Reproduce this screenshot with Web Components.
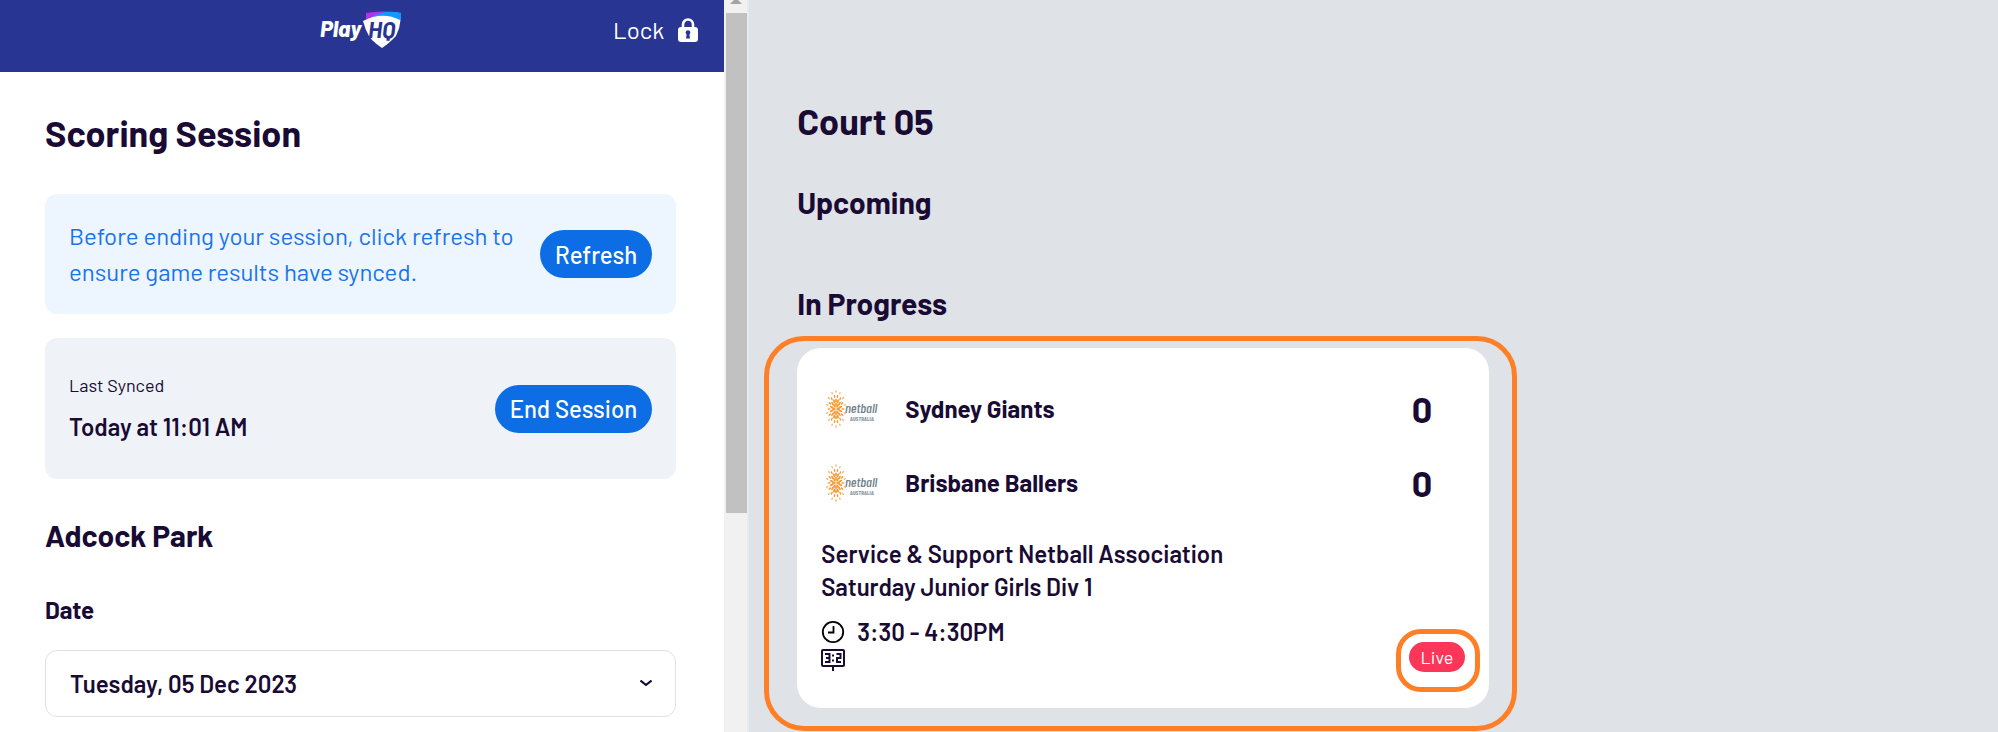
<!DOCTYPE html>
<html lang="en">
<head>
<meta charset="utf-8">
<meta name="viewport" content="width=device-width, initial-scale=1">
<title>PlayHQ Scoring</title>
<style>
  body {
    margin: 0;
    font-family: Barlow, Roboto, "Liberation Sans", sans-serif;
    font-size: 24px;
    line-height: 36px;
    color: #190b33;
    background: #dfe2e7;
  }
</style>
</head>
<body>
<scoring-app></scoring-app>

<script>
// Blue pill button, label comes from the slot
class PillButton extends HTMLElement {
  constructor() {
    super();
    this.attachShadow({ mode: 'open' });
    this.shadowRoot.innerHTML = `
      <style>
        :host { display: block; flex: none; }
        button {
          display: block;
          height: 48px;
          padding: 1px 15px 0;
          border: none;
          border-radius: 24px;
          background: #0c6de4;
          color: #fff;
          font: inherit;
          font-weight: 500;
          white-space: nowrap;
          cursor: pointer;
        }
        button:hover { background: #095bc1; }
      </style>
      <button type="button"><slot></slot></button>
    `;
  }
}
customElements.define('pill-button', PillButton);

// Rounded box with text on the left and an action on the right
class NoticeCard extends HTMLElement {
  constructor() {
    super();
    this.attachShadow({ mode: 'open' });
    this.shadowRoot.innerHTML = `
      <style>
        :host {
          display: flex;
          align-items: center;
          justify-content: space-between;
          gap: 24px;
          padding: 24px;
          border-radius: 12px;
          background: #eff3f8;
        }
        :host([tone="info"]) {
          background: #edf5fe;
          color: #1a73e8;
        }
        :host([tone="plain"]) { padding: 34px 24px; }
      </style>
      <div><slot></slot></div>
      <slot name="action"></slot>
    `;
  }
}
customElements.define('notice-card', NoticeCard);

class SessionHeader extends HTMLElement {
  constructor() {
    super();
    this.attachShadow({ mode: 'open' });
    this.shadowRoot.innerHTML = `
      <style>
        :host {
          display: grid;
          grid-template-columns: 1fr auto 1fr;
          align-items: center;
          box-sizing: border-box;
          min-height: 72px;
          padding: 0 26px 12px;
          background: #293592;
          color: #fff;
        }
        svg { display: block; }
        .logo { grid-column: 2; }
        button {
          justify-self: end;
          display: flex;
          align-items: center;
          gap: 14px;
          padding: 0;
          border: none;
          background: none;
          color: inherit;
          font: inherit;
          cursor: pointer;
        }
      </style>
      <svg class="logo" width="84" height="38" viewBox="0 0 84 38" role="img" aria-label="PlayHQ">
        <path d="M46 2 Q63 -1 81 2 V8 Q64 1 46 9 Z" fill="#b42ff0"/>
        <path d="M50 7 Q58 2 66 1 Q74 0 81 2 V9 Q64 2 50 7 Z" fill="#0c9bff"/>
        <path d="M43 10 Q62 0 80.500 9 Q80 17 76 25 L72 29 Q68 33 62 37 Q56 33 52 29 L49 25 Q45 18 43 10 Z" fill="#fff"/>
        <text x="0" y="26" font-family="Barlow" font-size="22" font-weight="800" font-style="italic" fill="#fff">Play</text>
        <text x="48" y="27" font-family="Barlow" font-size="23" font-weight="700" font-style="italic" fill="#293592">HQ</text>
      </svg>
      <button type="button">
        Lock
        <svg width="20" height="24" viewBox="0 0 20 24" aria-hidden="true">
          <path d="M5 11 V6.500 a5 5 0 0 1 10 0 V11" fill="none" stroke="#fff" stroke-width="2.600"/>
          <rect x="0" y="9" width="20" height="15" rx="3" fill="#fff"/>
          <circle cx="10" cy="14.500" r="2.300" fill="#293592"/>
          <path d="M9 14 h2 l1 6.500 h-4 z" fill="#293592"/>
        </svg>
      </button>
    `;
  }
}
customElements.define('session-header', SessionHeader);

class DateSelect extends HTMLElement {
  constructor() {
    super();
    this.attachShadow({ mode: 'open' });
    this.shadowRoot.innerHTML = `
      <style>
        :host { display: block; }
        label {
          display: block;
          margin-bottom: 22px;
          font-weight: 700;
        }
        .field { display: grid; align-items: center; }
        select, svg { grid-area: 1 / 1; }
        select {
          appearance: none;
          box-sizing: border-box;
          width: 100%;
          height: 67px;
          padding: 0 48px 0 24px;
          border: 1px solid #dfe2e7;
          border-radius: 12px;
          background: #fff;
          color: inherit;
          font: inherit;
          font-weight: 600;
        }
        svg { justify-self: end; margin-right: 24px; pointer-events: none; }
      </style>
      <label for="date">Date</label>
      <div class="field">
        <select id="date"><option>Tuesday, 05 Dec 2023</option></select>
        <svg width="12" height="7" viewBox="0 0 12 7" aria-hidden="true">
          <path d="M1.200 1.200 L6 5 L10.800 1.200" fill="none" stroke="#190b33" stroke-width="2.200" stroke-linecap="round" stroke-linejoin="round"/>
        </svg>
      </div>
    `;
  }
}
customElements.define('date-select', DateSelect);

// Left column: session status and venue filters
class SessionPanel extends HTMLElement {
  constructor() {
    super();
    this.attachShadow({ mode: 'open' });
    this.shadowRoot.innerHTML = `
      <style>
        :host { display: flex; background: #fff; }
        .content { flex: 1; min-width: 0; }
        main { padding: 38px 48px 0 45px; }
        h1, h2, p { margin: 0; }
        h1 { font-size: 36px; line-height: 46px; font-weight: 700; margin-bottom: 38px; }
        h2 { font-size: 30px; font-weight: 700; margin: 38px 0 39px; }
        notice-card + notice-card { margin-top: 24px; }
        .small { font-size: 18px; line-height: 27px; margin-bottom: 10px; }
        .when { font-weight: 600; }
        .bar {
          flex: none;
          box-sizing: border-box;
          display: flex;
          flex-direction: column;
          align-items: center;
          width: 25px;
          border-right: 2px solid #e9eaec;
          padding-left: 1px;
          background: #f1f1f1;
        }
        .bar svg { display: block; margin-bottom: 9px; }
        .thumb { width: 21px; height: 500px; max-height: 69%; background: #c1c1c1; }
      </style>
      <div class="content">
        <session-header></session-header>
        <main>
          <h1>Scoring Session</h1>
          <notice-card tone="info">
            Before ending your session, click refresh to ensure game results have synced.
            <pill-button slot="action">Refresh</pill-button>
          </notice-card>
          <notice-card tone="plain">
            <p class="small">Last Synced</p>
            <p class="when">Today at 11:01 AM</p>
            <pill-button slot="action">End Session</pill-button>
          </notice-card>
          <h2>Adcock Park</h2>
          <date-select></date-select>
        </main>
      </div>
      <div class="bar">
        <svg width="12" height="4" viewBox="0 0 12 4" aria-hidden="true"><path d="M4 0 h4 l4 4 H0 z" fill="#a3a3a3"/></svg>
        <div class="thumb"></div>
      </div>
    `;
  }
}
customElements.define('session-panel', SessionPanel);

// Netball Australia sunburst logo
class NetballLogo extends HTMLElement {
  constructor() {
    super();
    this.attachShadow({ mode: 'open' });
    this.shadowRoot.innerHTML = `
      <style>
        :host { display: block; flex: none; }
        svg { display: block; }
      </style>
      <svg width="56" height="40" viewBox="0 0 56 40" role="img" aria-label="Netball Australia">
        ${this.rays()}
        <text x="20" y="24" font-family="Barlow Condensed, Liberation Sans" font-size="14" font-weight="500" font-style="italic" fill="#6f8089">netball</text>
        <text x="25" y="32" font-family="Barlow Condensed, Liberation Sans" font-size="6" fill="#8d989e">AUSTRALIA</text>
      </svg>
    `;
  }

  // Rings of small dashes around the centre, larger towards the middle
  rays() {
    const rings = [[2.2, 4.5, 1.5], [4.4, 8.5, 1.5], [6.8, 13, 1.2], [9, 17.5, 0.9]];
    let out = '';
    rings.forEach(([rx, ry, size], r) => {
      const count = r === 0 ? 8 : 14;
      for (let i = 0; i < count; i++) {
        const a = (i + (r % 2) * 0.5) * 2 * Math.PI / count;
        const x = 11 + rx * Math.cos(a);
        const y = 20 + ry * Math.sin(a);
        const deg = Math.atan2(ry * Math.sin(a), rx * Math.cos(a)) * 180 / Math.PI;
        out += `<ellipse cx="${x.toFixed(2)}" cy="${y.toFixed(2)}" rx="${size * 1.4}" ry="${size * 0.6}" fill="#f9962b" transform="rotate(${deg.toFixed(1)} ${x.toFixed(2)} ${y.toFixed(2)})"/>`;
      }
    });
    return out;
  }
}
customElements.define('netball-logo', NetballLogo);

class TeamRow extends HTMLElement {
  constructor() {
    super();
    this.attachShadow({ mode: 'open' });
    this.shadowRoot.innerHTML = `
      <style>
        :host {
          display: flex;
          align-items: center;
          height: 74px;
          padding: 0 33px 0 4px;
          font-weight: 700;
        }
        .name { flex: 1; margin-left: 24px; }
        .score { font-size: 36px; }
      </style>
      <netball-logo></netball-logo>
      <span class="name"><slot></slot></span>
      <span class="score">${this.getAttribute('score')}</span>
    `;
  }
}
customElements.define('team-row', TeamRow);

class GameCard extends HTMLElement {
  constructor() {
    super();
    this.attachShadow({ mode: 'open' });
    this.shadowRoot.innerHTML = `
      <style>
        :host {
          display: block;
          position: relative;
          box-sizing: border-box;
          max-width: 692px;
          padding: 24px 24px 36px;
          border-radius: 24px;
          background: #fff;
          font-weight: 600;
        }
        /* highlight rings lie over the card and the badge */
        .ring {
          position: absolute;
          border: 5px solid #ff7f27;
          pointer-events: none;
        }
        .ring.card { inset: -12px -28px -23px -33px; border-radius: 40px; }
        .ring.badge { inset: -13px -15px -20px -13px; border-radius: 25px; }
        .league { margin-top: 17px; line-height: 33px; }
        .foot {
          display: flex;
          align-items: flex-end;
          justify-content: space-between;
          margin-top: 12px;
        }
        .time { display: flex; align-items: center; gap: 12px; line-height: 33px; }
        svg { display: block; }
        .live {
          position: relative;
          padding: 0 12px;
          border-radius: 15px;
          background: #fb3658;
          color: #fff;
          font-size: 18px;
          line-height: 30px;
          font-weight: 400;
        }
      </style>
      <slot name="teams"></slot>
      <div class="league"><slot name="league"></slot></div>
      <div class="foot">
        <div>
          <div class="time">
            <svg width="24" height="24" viewBox="0 0 24 24" aria-hidden="true">
              <circle cx="12" cy="12" r="10.200" fill="none" stroke="#000" stroke-width="1.800"/>
              <path d="M12.500 6 V12.500 H7" fill="none" stroke="#000" stroke-width="1.800"/>
            </svg>
            <slot name="time"></slot>
          </div>
          <svg width="24" height="24" viewBox="0 0 24 24" fill="none" stroke="#190b33" role="img" aria-label="Scoreboard">
            <rect x="1" y="2" width="22" height="16" rx="1" stroke-width="2"/>
            <path d="M12 18 V23" stroke-width="2"/>
            <path d="M4 6 H8.500 V14 H4 M5 10 H8.500 M15.500 6 H19.500 V10 H16 V14 H20" stroke-width="2"/>
            <path d="M11 7.500 h2 M11 12.500 h2" stroke-width="2"/>
          </svg>
        </div>
        <div class="live">Live<span class="ring badge"></span></div>
      </div>
      <span class="ring card"></span>
    `;
  }
}
customElements.define('game-card', GameCard);

// Right column: games of the selected court
class CourtGames extends HTMLElement {
  constructor() {
    super();
    this.attachShadow({ mode: 'open' });
    this.shadowRoot.innerHTML = `
      <style>
        :host { display: block; padding: 98px 48px 24px; }
        h2, h3 { margin: 0; font-weight: 700; }
        h2 { font-size: 36px; line-height: 46px; margin-bottom: 40px; }
        h3 { font-size: 30px; }
        h3 + h3 { margin: 65px 0 27px; }
      </style>
      <h2>Court 05</h2>
      <h3>Upcoming</h3>
      <h3>In Progress</h3>
      <game-card>
        <team-row slot="teams" score="0">Sydney Giants</team-row>
        <team-row slot="teams" score="0">Brisbane Ballers</team-row>
        <div slot="league">Service &amp; Support Netball Association</div>
        <div slot="league">Saturday Junior Girls Div 1</div>
        <span slot="time">3:30 - 4:30PM</span>
      </game-card>
    `;
  }
}
customElements.define('court-games', CourtGames);

class ScoringApp extends HTMLElement {
  constructor() {
    super();
    this.attachShadow({ mode: 'open' });
    this.shadowRoot.innerHTML = `
      <style>
        :host {
          display: grid;
          grid-template-columns: 3fr 5fr;
          min-height: 100vh;
        }
      </style>
      <session-panel></session-panel>
      <court-games></court-games>
    `;
  }
}
customElements.define('scoring-app', ScoringApp);
</script>
</body>
</html>
